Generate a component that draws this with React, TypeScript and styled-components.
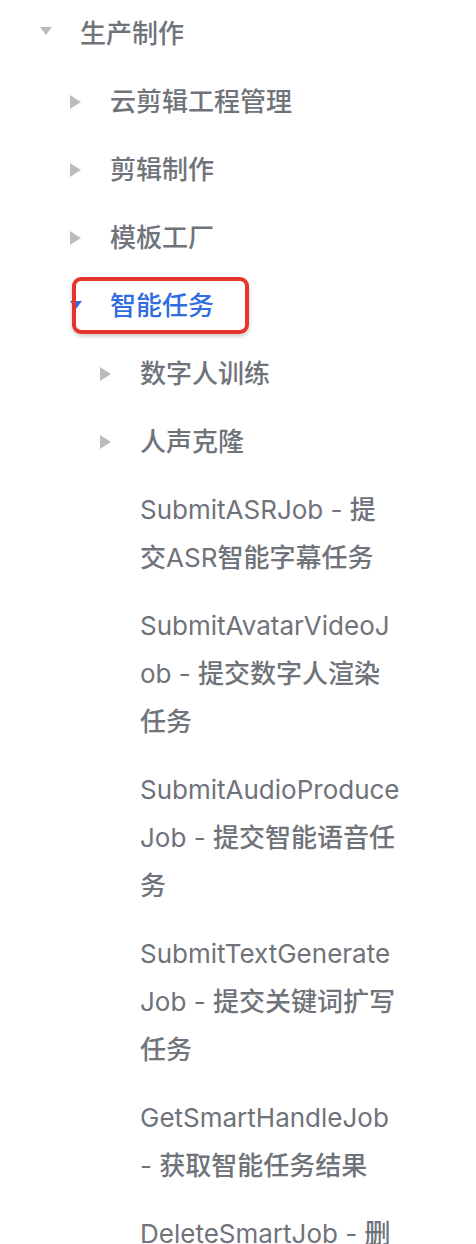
import React from "react";
import styled, { createGlobalStyle } from "styled-components";

const GlobalStyle = createGlobalStyle`
  html, body {
    margin: 0;
    padding: 0;
    background: #ffffff;
  }
  body {
    font-family: Inter, "Noto Sans CJK SC", sans-serif;
  }
`;

type TreeNode = {
  title: string[];
  open?: boolean;
  active?: boolean;
  children?: TreeNode[];
};

// api leaves keep the line breaks of the narrow docs sidebar
const tree: TreeNode[] = [
  {
    title: ["生产制作"],
    open: true,
    children: [
      { title: ["云剪辑工程管理"], children: [] },
      { title: ["剪辑制作"], children: [] },
      { title: ["模板工厂"], children: [] },
      {
        title: ["智能任务"],
        open: true,
        active: true,
        children: [
          { title: ["数字人训练"], children: [] },
          { title: ["人声克隆"], children: [] },
          { title: ["SubmitASRJob - 提", "交ASR智能字幕任务"] },
          { title: ["SubmitAvatarVideoJ", "ob - 提交数字人渲染", "任务"] },
          { title: ["SubmitAudioProduce", "Job - 提交智能语音任", "务"] },
          { title: ["SubmitTextGenerate", "Job - 提交关键词扩写", "任务"] },
          { title: ["GetSmartHandleJob", "- 获取智能任务结果"] },
          { title: ["DeleteSmartJob - 删", "除智能任务"] },
        ],
      },
    ],
  },
];

const Menu = styled.nav`
  width: 476px;
`;

const Row = styled.div<{ $level: number }>`
  display: flex;
  align-items: flex-start;
  padding: 10px 0 10px ${(p) => 40 + p.$level * 30}px;
  font-size: 26px;
  line-height: 48px;
`;

const CaretSlot = styled.span`
  flex: 0 0 40px;
  height: 48px;
  display: flex;
  align-items: center;
`;

const Label = styled.span<{ $active?: boolean }>`
  position: relative;
  flex: 0 0 auto;
  color: ${(p) => (p.$active ? "#2f6de1" : "#6f737a")};
  font-weight: 400;
  white-space: nowrap;
`;

const Line = styled.span`
  display: block;
`;

// chinese glyphs sit a touch heavier than the latin api names
const Han = styled.span`
  font-weight: 500;
`;

// the red annotation frame drawn over the active entry
const Mark = styled.span`
  position: absolute;
  top: -5px;
  bottom: -4px;
  left: -38px;
  right: -35px;
  border: 4px solid #e5342b;
  border-radius: 9px;
  box-shadow: 0 2px 4px rgba(0, 0, 0, 0.22);
  pointer-events: none;
`;

const CaretIcon = ({ open, active }: { open?: boolean; active?: boolean }) => {
  const fill = active ? "#2f6de1" : "#b9bbbf";
  if (open) {
    return (
      <svg width="12" height="8" viewBox="0 0 12 8" style={{ marginTop: active ? -2 : -6 }}>
        <polygon points="0,0 12,0 6,8" fill={fill} />
      </svg>
    );
  }
  return (
    <svg width="11" height="14" viewBox="0 0 11 14">
      <polygon points="0,0 11,7 0,14" fill={fill} />
    </svg>
  );
};

const renderText = (text: string) =>
  text
    .split(/([\u4e00-\u9fff]+)/)
    .filter(Boolean)
    .map((part, i) =>
      /[\u4e00-\u9fff]/.test(part) ? <Han key={i}>{part}</Han> : <React.Fragment key={i}>{part}</React.Fragment>
    );

const TreeItem = ({ node, level }: { node: TreeNode; level: number }) => {
  const isFolder = !!node.children;
  return (
    <>
      <Row $level={level}>
        <CaretSlot>{isFolder && <CaretIcon open={node.open} active={node.active} />}</CaretSlot>
        <Label $active={node.active}>
          {node.title.map((line) => (
            <Line key={line}>{renderText(line)}</Line>
          ))}
          {node.active && <Mark />}
        </Label>
      </Row>
      {node.open &&
        node.children?.map((child) => (
          <TreeItem key={child.title.join("")} node={child} level={level + 1} />
        ))}
    </>
  );
};

const App = () => {
  return (
    <>
      <GlobalStyle />
      <Menu>
        {tree.map((node) => (
          <TreeItem key={node.title.join("")} node={node} level={0} />
        ))}
      </Menu>
    </>
  );
};

export default App;
